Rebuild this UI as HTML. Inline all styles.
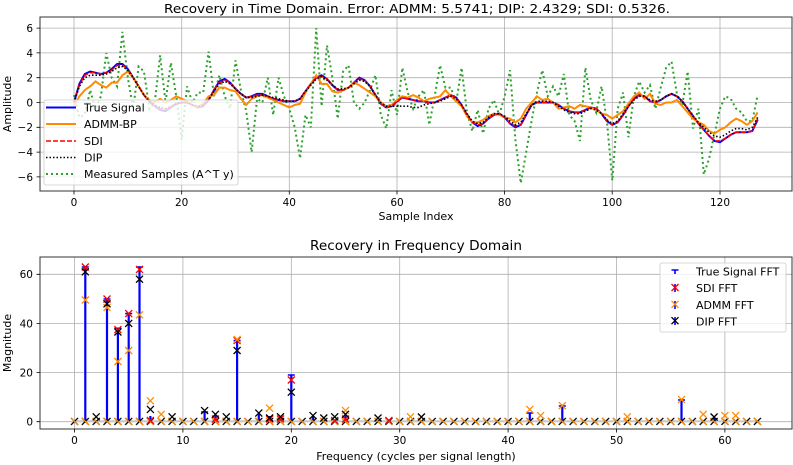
<!DOCTYPE html>
<html><head><meta charset="utf-8"><style>
html,body{margin:0;padding:0;background:#fff;}
svg{display:block;font-family:"DejaVu Sans","Liberation Sans",sans-serif;}
</style></head><body>
<svg width="793" height="465" viewBox="0 0 793 465" xmlns="http://www.w3.org/2000/svg">
<defs>
<g id="xr"><path d="M-3.5,-3.5L3.5,3.5M-3.5,3.5L3.5,-3.5" stroke="#ff0000" stroke-width="1.3"/></g>
<g id="xo"><path d="M-3.5,-3.5L3.5,3.5M-3.5,3.5L3.5,-3.5" stroke="#ff8c00" stroke-width="1.3"/></g>
<g id="xk"><path d="M-3.5,-3.5L3.5,3.5M-3.5,3.5L3.5,-3.5" stroke="#000" stroke-width="1.3"/></g>
<g id="tb"><path d="M-3.5,0L3.5,0M0,0L0,4" stroke="#0000ff" stroke-width="1.6"/></g>
<pattern id="base" x="74.5" y="416" width="10.84" height="11" patternUnits="userSpaceOnUse">
<path d="M1.9,1.9L8.9,8.9M1.9,8.9L8.9,1.9" stroke="#000" stroke-width="1.3" transform="translate(-5.4,0)"/>
<path d="M1.9,1.9L8.9,8.9M1.9,8.9L8.9,1.9" stroke="#000" stroke-width="1.3" transform="translate(5.44,0)"/>
<path d="M1.9,1.9L8.9,8.9" stroke="#ff8c00" stroke-width="1.3" transform="translate(-5.4,0)"/>
<path d="M1.9,1.9L8.9,8.9" stroke="#ff8c00" stroke-width="1.3" transform="translate(5.44,0)"/>
</pattern>
</defs>

<g stroke="#b0b0b0" stroke-width="0.8">
<path d="M74,17V191M181.7,17V191M289.3,17V191M397,17V191M504.6,17V191M612.2,17V191M720,17V191"/>
<path d="M40,28.1H792M40,52.9H792M40,77.7H792M40,102.5H792M40,127.3H792M40,152.1H792M40,176.9H792"/>
</g>
<g transform="translate(74,102.5) scale(5.383,-12.4)" fill="none">
<polyline vector-effect="non-scaling-stroke" stroke="#2ca02c" stroke-width="2" stroke-dasharray="2,3" points="0,0.6 1,-1.2 2,-1 3,1 4,-0.5 5,0.5 6,4 7,2 8,1.3 9,5.7 10,2 11,-0.5 12,2.9 13,2.5 14,-0.5 15,0 16,3.8 17,0 18,3.2 19,0.5 20,-3 21,1.3 22,0 23,0.8 24,0.8 25,4.1 26,0.5 27,2.2 28,0.5 29,-0.5 30,3.4 31,1 32,-0.7 33,-4 34,0.3 35,0 36,2 37,-1 38,2 39,0.5 40,-0.5 41,-2 42,-4.5 43,-1 44,-2 45,6 46,-0.3 47,4.6 48,2 49,-1.3 50,2.5 51,3 52,0 53,-0.5 54,0 55,1 56,2.2 57,-1 58,-2.1 59,1 60,-1 61,2.8 62,0.8 63,-0.5 64,0.5 65,1 66,-1.8 67,0.5 68,3 69,1.2 70,1.2 71,0 72,2.8 73,-0.8 74,-2.3 75,-0.6 76,-2.5 77,-0.5 78,0.2 79,-1 80,0.5 81,2.6 82,-3 83,-6.5 84,-4 85,-1.5 86,0.8 87,2.6 88,0.5 89,1.3 90,0.5 91,2.3 92,-1 93,-1.5 94,-3.1 95,2.8 96,0.2 97,-0.8 98,1.3 99,-1.5 100,-6.3 101,-0.5 102,0.8 103,-2.8 104,0.5 105,1.7 106,0.8 107,1.4 108,-0.5 109,1.2 110,2.8 111,3.3 112,0.7 113,-0.2 114,2.5 115,-2.1 116,-0.5 117,-5.8 118,-4.5 119,-2.5 120,-0.5 121,0.5 122,0.3 123,-0.5 124,-0.8 125,-1.5 126,-1.5 127,0.6"/>
<polyline vector-effect="non-scaling-stroke" stroke="#0000ff" stroke-width="2" points="0,0 1,1.5 2,2.3 3,2.5 4,2.4 5,2.3 6,2.4 7,2.7 8,3.1 9,3.1 10,2.7 11,2 12,1.3 13,0.6 14,0.1 15,-0.3 16,-0.6 17,-0.7 18,-0.4 19,-0.1 20,0 21,0 22,-0.2 23,-0.4 24,-0.3 25,0.2 26,1 27,1.7 28,1.9 29,1.6 30,1.1 31,0.7 32,0.4 33,0.5 34,0.7 35,0.7 36,0.5 37,0.3 38,0.2 39,0.1 40,0.1 41,0.1 42,0.3 43,0.9 44,1.5 45,2 46,2.2 47,1.9 48,1.4 49,1 50,1 51,1.2 52,1.6 53,2 54,1.8 55,1.3 56,0.6 57,-0.1 58,-0.4 59,-0.3 60,0.1 61,0.4 62,0.3 63,0.2 64,0.1 65,0.1 66,0 67,0 68,0.2 69,0.4 70,0.6 71,0.4 72,-0.2 73,-1 74,-1.6 75,-1.9 76,-1.7 77,-1.3 78,-1 79,-0.9 80,-1.2 81,-1.7 82,-2 83,-1.8 84,-1 85,-0.2 86,0 87,0 88,0 89,0 90,-0.2 91,-0.5 92,-0.7 93,-0.8 94,-0.8 95,-0.6 96,-0.4 97,-0.5 98,-0.9 99,-1.5 100,-1.8 101,-1.6 102,-1 103,-0.3 104,0.3 105,0.6 106,0.5 107,0.1 108,0 109,0.2 110,0.5 111,0.7 112,0.5 113,0.1 114,-0.5 115,-1.1 116,-1.7 117,-2.2 118,-2.7 119,-3.1 120,-3.2 121,-2.9 122,-2.6 123,-2.4 124,-2.4 125,-2.4 126,-2.3 127,-1.4"/>
<polyline vector-effect="non-scaling-stroke" stroke="#ff8c00" stroke-width="2" points="0,-0.3 1,0.5 2,1 3,1.3 4,1.7 5,1.4 6,1.2 7,1.6 8,1.6 9,2.2 10,2.5 11,2 12,1.3 13,0.6 14,0.2 15,0 16,0.3 17,0 18,0.2 19,0.5 20,0.3 21,0.1 22,-0.2 23,-0.4 24,-0.1 25,0.5 26,0.6 27,1.2 28,1.2 29,1 30,0.9 31,0.3 32,-0.2 33,0.3 34,0.5 35,0.6 36,0.4 37,0.2 38,0 39,-0.2 40,-0.4 41,-0.2 42,-0.1 43,0.8 44,1.5 45,2.2 46,1.5 47,1.5 48,0.9 49,0.8 50,1 51,1.2 52,1.6 53,1.4 54,1.1 55,0.8 56,0.5 57,0 58,-0.3 59,-0.2 60,0.2 61,0.5 62,0.4 63,0.6 64,0.4 65,0.1 66,0.3 67,0.4 68,0.5 69,1 70,0.5 71,0.1 72,-0.3 73,-1.1 74,-1.6 75,-1.6 76,-1.4 77,-1.1 78,-0.9 79,-1 80,-1.2 81,-1.3 82,-1.6 83,-1.3 84,-0.5 85,0 86,0.5 87,0.2 88,0.3 89,0 90,-0.5 91,-0.4 92,-0.3 93,-0.5 94,-0.2 95,-0.3 96,-0.4 97,-0.6 98,-0.9 99,-1 100,-1.3 101,-1 102,-0.7 103,-0.1 104,0.5 105,0.8 106,0.3 107,0.7 108,-0.1 109,-0.2 110,0 111,0 112,0.2 113,-0.3 114,-0.8 115,-1.3 116,-1.6 117,-1.8 118,-2.3 119,-2.5 120,-2.2 121,-2 122,-1.6 123,-1.3 124,-1.5 125,-1.8 126,-1.5 127,-0.8"/>
<polyline vector-effect="non-scaling-stroke" stroke="#ff0000" stroke-width="1.6" stroke-dasharray="5,2" points="0,0 1,1.4 2,2.2 3,2.4 4,2.4 5,2.3 6,2.4 7,2.6 8,3 9,3 10,2.7 11,2 12,1.3 13,0.6 14,0.1 15,-0.3 16,-0.5 17,-0.6 18,-0.4 19,-0.1 20,0 21,0 22,-0.2 23,-0.4 24,-0.3 25,0.2 26,1 27,1.6 28,1.8 29,1.6 30,1.1 31,0.7 32,0.4 33,0.5 34,0.6 35,0.6 36,0.5 37,0.3 38,0.2 39,0.1 40,0.1 41,0.1 42,0.3 43,0.9 44,1.5 45,2 46,2.1 47,1.9 48,1.4 49,1 50,1 51,1.2 52,1.6 53,1.9 54,1.8 55,1.3 56,0.6 57,-0.1 58,-0.4 59,-0.3 60,0.1 61,0.4 62,0.3 63,0.2 64,0.1 65,0.1 66,0 67,0 68,0.2 69,0.4 70,0.6 71,0.4 72,-0.2 73,-1 74,-1.6 75,-1.8 76,-1.7 77,-1.3 78,-1 79,-0.9 80,-1.2 81,-1.7 82,-1.9 83,-1.8 84,-1 85,-0.2 86,0 87,0 88,0 89,0 90,-0.2 91,-0.5 92,-0.7 93,-0.8 94,-0.8 95,-0.6 96,-0.4 97,-0.5 98,-0.9 99,-1.5 100,-1.8 101,-1.6 102,-1 103,-0.3 104,0.3 105,0.6 106,0.5 107,0.1 108,0 109,0.2 110,0.5 111,0.7 112,0.5 113,0.1 114,-0.5 115,-1.1 116,-1.7 117,-2.2 118,-2.7 119,-3.1 120,-3.1 121,-2.9 122,-2.6 123,-2.4 124,-2.4 125,-2.4 126,-2.3 127,-1.3"/>
<polyline vector-effect="non-scaling-stroke" stroke="#000" stroke-width="1.6" stroke-dasharray="1.5,2" points="0,0 1,1.3 2,2 3,2.2 4,2.2 5,2.2 6,2.3 7,2.5 8,2.8 9,2.9 10,2.6 11,2 12,1.3 13,0.6 14,0.1 15,-0.2 16,-0.4 17,-0.5 18,-0.3 19,-0.1 20,0 21,0 22,-0.2 23,-0.3 24,-0.2 25,0.2 26,0.9 27,1.5 28,1.7 29,1.5 30,1.1 31,0.7 32,0.4 33,0.4 34,0.5 35,0.6 36,0.5 37,0.4 38,0.3 39,0.2 40,0.1 41,0.1 42,0.3 43,0.9 44,1.4 45,1.9 46,2.1 47,1.8 48,1.4 49,1.1 50,1.1 51,1.2 52,1.5 53,1.8 54,1.7 55,1.3 56,0.6 57,0 58,-0.3 59,-0.3 60,-0.3 61,-0.3 62,-0.3 63,-0.4 64,-0.4 65,-0.2 66,-0.1 67,0 68,0.1 69,0.3 70,0.5 71,0.3 72,-0.2 73,-0.9 74,-1.5 75,-1.7 76,-1.6 77,-1.2 78,-0.9 79,-0.9 80,-1.1 81,-1.5 82,-1.8 83,-1.6 84,-0.9 85,-0.2 86,0.1 87,0.1 88,0.1 89,0 90,-0.3 91,-0.6 92,-0.8 93,-0.9 94,-0.9 95,-0.7 96,-0.5 97,-0.6 98,-0.9 99,-1.4 100,-1.7 101,-1.5 102,-0.9 103,-0.3 104,0.2 105,0.5 106,0.5 107,0.2 108,0.1 109,0.2 110,0.5 111,0.7 112,0.5 113,0.1 114,-0.5 115,-1.1 116,-1.6 117,-2 118,-2.4 119,-2.7 120,-2.8 121,-2.6 122,-2.3 123,-2.1 124,-2.1 125,-2.2 126,-2 127,-1.2"/>
</g>
<rect x="40" y="17" width="752" height="174" fill="none" stroke="#333" stroke-width="1"/>
<rect x="44" y="100" width="194" height="85" rx="2" fill="#fff" fill-opacity="0.8" stroke="#ccc" stroke-width="0.8"/>
<g fill="none">
<path d="M46,107.5H76" stroke="#0000ff" stroke-width="2"/>
<path d="M46,124H76" stroke="#ff8c00" stroke-width="2"/>
<path d="M46,141H76" stroke="#ff0000" stroke-width="1.6" stroke-dasharray="5,2"/>
<path d="M46,157.5H76" stroke="#000" stroke-width="1.6" stroke-dasharray="1.5,2"/>
<path d="M46,174H76" stroke="#2ca02c" stroke-width="2" stroke-dasharray="2,3"/>
</g>
<g font-size="11" fill="#000">
<text x="84" y="111.5">True Signal</text>
<text x="84" y="128">ADMM-BP</text>
<text x="84" y="145">SDI</text>
<text x="84" y="161.5">DIP</text>
<text x="84" y="178">Measured Samples (A^T y)</text>
</g>
<g stroke="#000" stroke-width="0.8">
<path d="M74,191v3.5M181.7,191v3.5M289.3,191v3.5M397,191v3.5M504.6,191v3.5M612.2,191v3.5M720,191v3.5"/>
<path d="M40,28.1h-3.5M40,52.9h-3.5M40,77.7h-3.5M40,102.5h-3.5M40,127.3h-3.5M40,152.1h-3.5M40,176.9h-3.5"/>
</g>
<g font-size="10.5" fill="#000" text-anchor="middle">
<text x="74" y="206">0</text><text x="181.7" y="206">20</text><text x="289.3" y="206">40</text><text x="397" y="206">60</text><text x="504.6" y="206">80</text><text x="612.2" y="206">100</text><text x="720" y="206">120</text>
</g>
<g font-size="10.5" fill="#000" text-anchor="end">
<text x="33" y="32">6</text><text x="33" y="56.8">4</text><text x="33" y="81.6">2</text><text x="33" y="106.4">0</text><text x="33" y="131.2">−2</text><text x="33" y="156">−4</text><text x="33" y="180.8">−6</text>
</g>
<text x="164" y="13" font-size="12.5" textLength="506" lengthAdjust="spacingAndGlyphs">Recovery in Time Domain. Error: ADMM: 5.5741; DIP: 2.4329; SDI: 0.5326.</text>
<text x="416" y="220" font-size="11" text-anchor="middle">Sample Index</text>
<text transform="translate(11,104) rotate(-90)" font-size="11" text-anchor="middle">Amplitude</text>

<g stroke="#b0b0b0" stroke-width="0.8">
<path d="M74.5,257V429M182.9,257V429M291.3,257V429M399.7,257V429M508.1,257V429M616.5,257V429M724.9,257V429"/>
<path d="M40,421.7H792M40,372.6H792M40,323.4H792M40,274.3H792"/>
</g>
<path d="M74.5,421.2H757.4" stroke="#c8c8c8" stroke-width="2"/>
<g stroke="#0000ff" stroke-width="2.2">
<path d="M85.3,421.7V267M107,421.7V299M117.9,421.7V328.3M128.7,421.7V313.6M139.5,421.7V267M237.1,421.7V340.6M291.3,421.7V375M204.6,421.7V412M215.4,421.7V414M258.8,421.7V414M269.6,421.7V416M150.4,421.7V416M313,421.7V416M345.5,421.7V414M529.8,421.7V413M562.3,421.7V406M681.5,421.7V400M714.1,421.7V418M280.5,421.7V417"/>
</g>
<g>
<use href="#tb" x="85.3" y="267"/><use href="#tb" x="107" y="299"/><use href="#tb" x="117.9" y="328.3"/><use href="#tb" x="128.7" y="313.6"/><use href="#tb" x="139.5" y="267"/><use href="#tb" x="237.1" y="340.6"/><use href="#tb" x="291.3" y="375"/><use href="#tb" x="204.6" y="412"/><use href="#tb" x="529.8" y="413"/><use href="#tb" x="562.3" y="406"/><use href="#tb" x="681.5" y="400"/>
</g>
<rect x="69" y="416" width="694" height="11" fill="url(#base)"/>
<g>
<use href="#xr" x="85.3" y="267"/><use href="#xr" x="107" y="299"/><use href="#xr" x="117.9" y="329.6"/><use href="#xr" x="128.7" y="313.6"/><use href="#xr" x="139.5" y="269.4"/><use href="#xr" x="237.1" y="340.6"/><use href="#xr" x="291.3" y="380"/>
<use href="#xr" x="150.4" y="420.5"/><use href="#xr" x="215.4" y="419"/><use href="#xr" x="269.6" y="419"/><use href="#xr" x="280.5" y="419"/><use href="#xr" x="334.7" y="420.5"/><use href="#xr" x="345.5" y="419"/><use href="#xr" x="388.9" y="420.5"/>
</g>
<g>
<use href="#xo" x="85.3" y="300"/><use href="#xo" x="107" y="307.5"/><use href="#xo" x="117.9" y="361.5"/><use href="#xo" x="128.7" y="350.5"/><use href="#xo" x="139.5" y="314.8"/><use href="#xo" x="150.4" y="400.8"/><use href="#xo" x="161.2" y="414.3"/><use href="#xo" x="237.1" y="339.4"/><use href="#xo" x="269.6" y="408.2"/><use href="#xo" x="345.5" y="410.6"/><use href="#xo" x="529.8" y="409.4"/><use href="#xo" x="540.6" y="415.6"/><use href="#xo" x="562.3" y="405.7"/><use href="#xo" x="627.3" y="416.8"/><use href="#xo" x="681.5" y="399.6"/><use href="#xo" x="703.2" y="414.3"/><use href="#xo" x="724.9" y="415.6"/><use href="#xo" x="735.7" y="415.6"/><use href="#xo" x="410.5" y="416.8"/><use href="#xo" x="280.5" y="416.8"/>
</g>
<g>
<use href="#xk" x="85.3" y="271.8"/><use href="#xk" x="96.2" y="416.8"/><use href="#xk" x="107" y="303.8"/><use href="#xk" x="117.9" y="332"/><use href="#xk" x="128.7" y="323.4"/><use href="#xk" x="139.5" y="279.2"/><use href="#xk" x="150.4" y="409.4"/><use href="#xk" x="172.1" y="416.8"/><use href="#xk" x="204.6" y="410.6"/><use href="#xk" x="215.4" y="414.3"/><use href="#xk" x="226.3" y="416.8"/><use href="#xk" x="237.1" y="350.5"/><use href="#xk" x="258.8" y="413.1"/><use href="#xk" x="269.6" y="418"/><use href="#xk" x="280.5" y="416.8"/><use href="#xk" x="291.3" y="392.2"/><use href="#xk" x="313" y="415.6"/><use href="#xk" x="334.7" y="416.8"/><use href="#xk" x="345.5" y="414.3"/><use href="#xk" x="378" y="418"/><use href="#xk" x="421.4" y="417"/><use href="#xk" x="323.8" y="418"/><use href="#xk" x="714.1" y="417"/>
</g>
<rect x="40" y="257" width="752" height="172" fill="none" stroke="#333" stroke-width="1"/>
<rect x="660" y="263" width="126" height="69" rx="2" fill="#fff" fill-opacity="0.8" stroke="#ccc" stroke-width="0.8"/>
<use href="#tb" x="675" y="270"/>
<path d="M675,284V292" stroke="#0000ff" stroke-width="1.6"/><use href="#xr" x="675" y="287.5"/>
<path d="M675,301V309" stroke="#0000ff" stroke-width="1.6"/><use href="#xo" x="675" y="304.3"/>
<path d="M675,317V325" stroke="#0000ff" stroke-width="1.6"/><use href="#xk" x="675" y="320.7"/>
<g font-size="11" fill="#000">
<text x="696" y="275.5">True Signal FFT</text>
<text x="696" y="292">SDI FFT</text>
<text x="696" y="309">ADMM FFT</text>
<text x="696" y="325.5">DIP FFT</text>
</g>
<g stroke="#000" stroke-width="0.8">
<path d="M74.5,429v3.5M182.9,429v3.5M291.3,429v3.5M399.7,429v3.5M508.1,429v3.5M616.5,429v3.5M724.9,429v3.5"/>
<path d="M40,421.7h-3.5M40,372.6h-3.5M40,323.4h-3.5M40,274.3h-3.5"/>
</g>
<g font-size="10.5" fill="#000" text-anchor="middle">
<text x="74.5" y="444">0</text><text x="182.9" y="444">10</text><text x="291.3" y="444">20</text><text x="399.7" y="444">30</text><text x="508.1" y="444">40</text><text x="616.5" y="444">50</text><text x="724.9" y="444">60</text>
</g>
<g font-size="10.5" fill="#000" text-anchor="end">
<text x="33" y="425.6">0</text><text x="33" y="376.5">20</text><text x="33" y="327.3">40</text><text x="33" y="278.2">60</text>
</g>
<text x="310" y="250" font-size="13" textLength="212" lengthAdjust="spacingAndGlyphs">Recovery in Frequency Domain</text>
<text x="416" y="460" font-size="11" text-anchor="middle">Frequency (cycles per signal length)</text>
<text transform="translate(11,343) rotate(-90)" font-size="11" text-anchor="middle">Magnitude</text>
</svg>
</body></html>
